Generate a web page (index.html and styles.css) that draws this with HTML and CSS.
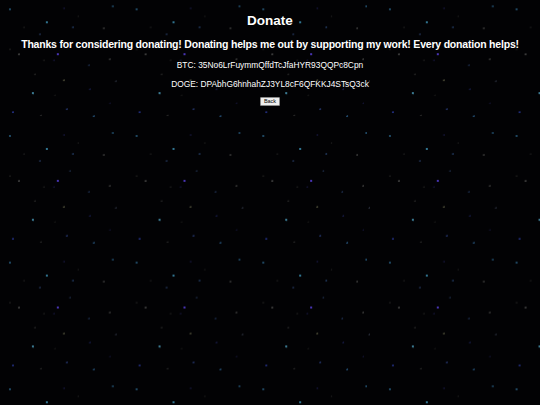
FILE: index.html
```html
<!DOCTYPE html>
<html lang="en">
<head>
<meta charset="utf-8">
<title>Donate</title>
<link rel="stylesheet" href="styles.css">
</head>
<body>
<main class="page">
  <h1 class="title">Donate</h1>
  <p class="intro">Thanks for considering donating! Donating helps me out by supporting my work! Every donation helps!</p>
  <p class="addr">BTC: 35No6LrFuymmQffdTcJfaHYR93QQPc8Cpn</p>
  <p class="addr">DOGE: DPAbhG6hnhahZJ3YL8cF6QFKKJ4STsQ3ck</p>
  <button class="back" type="button">Back</button>
</main>
</body>
</html>
```
FILE: styles.css
```css
html, body {
  margin: 0;
  padding: 0;
}
body {
  width: 540px;
  height: 405px;
  overflow: hidden;
  color: #fff;
  font-family: "Comic Sans MS", "Liberation Sans", sans-serif;
  background-color: #020204;
  background-size: 126.67px 126.67px;
  background-position: 0 130px;
  background-image:
    radial-gradient(circle at 10px 6px, #1e4660 0 0.8px, transparent 1.2px),
    radial-gradient(circle at 64px 5px, #121230 0 0.6px, transparent 1px),
    radial-gradient(circle at 113px 3px, #1e4662 0 0.8px, transparent 1.2px),
    radial-gradient(circle at 78px 13px, #1a1a1a 0 0.5px, transparent 0.9px),
    radial-gradient(circle at 47px 19px, #307490 0 1px, transparent 1.4px),
    radial-gradient(circle at 24px 24px, #1e1e1e 0 0.5px, transparent 0.9px),
    radial-gradient(circle at 73px 24px, #1c3050 0 0.7px, transparent 1.1px),
    radial-gradient(circle at 104px 25px, #303030 0 0.8px, transparent 1.2px),
    radial-gradient(circle at 40px 31px, #18243e 0 0.7px, transparent 1.1px),
    radial-gradient(circle at 70px 41px, #1a263e 0 0.6px, transparent 1px),
    radial-gradient(circle at 10px 46px, #181818 0 0.6px, transparent 1px),
    radial-gradient(circle at 19px 51px, #3c3c3c 0 0.7px, transparent 1.1px),
    radial-gradient(circle at 58px 51px, #4834b4 0 1px, transparent 1.4px),
    radial-gradient(circle at 44px 57px, #181818 0 0.6px, transparent 1px),
    radial-gradient(circle at 54px 57px, #121230 0 0.6px, transparent 1px),
    radial-gradient(circle at 110px 56px, #303030 0 0.8px, transparent 1.2px),
    radial-gradient(circle at 89px 62px, #182640 0 0.7px, transparent 1.1px),
    radial-gradient(circle at 35px 71px, #222 0 0.6px, transparent 1px),
    radial-gradient(circle at 64px 77px, #444432 0 0.7px, transparent 1.1px),
    radial-gradient(circle at 116px 78px, #242834 0 0.7px, transparent 1.1px),
    radial-gradient(circle at 90px 86px, #141840 0 0.7px, transparent 1.1px),
    radial-gradient(circle at 33px 90px, #3a7890 0 1px, transparent 1.4px),
    radial-gradient(circle at 55px 92px, #141414 0 0.6px, transparent 1px),
    radial-gradient(circle at 110px 100px, #121230 0 0.6px, transparent 1px),
    radial-gradient(circle at 13px 109px, #202c78 0 0.8px, transparent 1.2px),
    radial-gradient(circle at 41px 112px, #262626 0 0.6px, transparent 1px),
    radial-gradient(circle at 67px 106px, #1e2c5a 0 0.8px, transparent 1.2px),
    radial-gradient(circle at 94px 113px, #204668 0 0.8px, transparent 1.2px);
}
.page {
  display: flex;
  flex-direction: column;
  align-items: center;
  text-align: center;
  padding-top: 12px;
}
.title {
  margin: 0;
  font-size: 13.5px;
  line-height: 17px;
  font-weight: bold;
}
.intro {
  margin: 8px 0 0;
  font-size: 10.5px;
  line-height: 14px;
  font-weight: bold;
  letter-spacing: -0.2px;
  white-space: nowrap;
}
.addr {
  margin: 8px 0 0;
  font-size: 8.4px;
  line-height: 12px;
  white-space: nowrap;
}
.addr + .addr {
  margin-top: 7px;
}
.back {
  margin-top: 7px;
  height: 9px;
  padding: 0 3px;
  font-family: "Liberation Sans", sans-serif;
  font-size: 5.5px;
  line-height: 7px;
  color: #000;
  background: #efefef;
  border: 1px solid #8a8a8a;
  border-radius: 1px;
}
```
